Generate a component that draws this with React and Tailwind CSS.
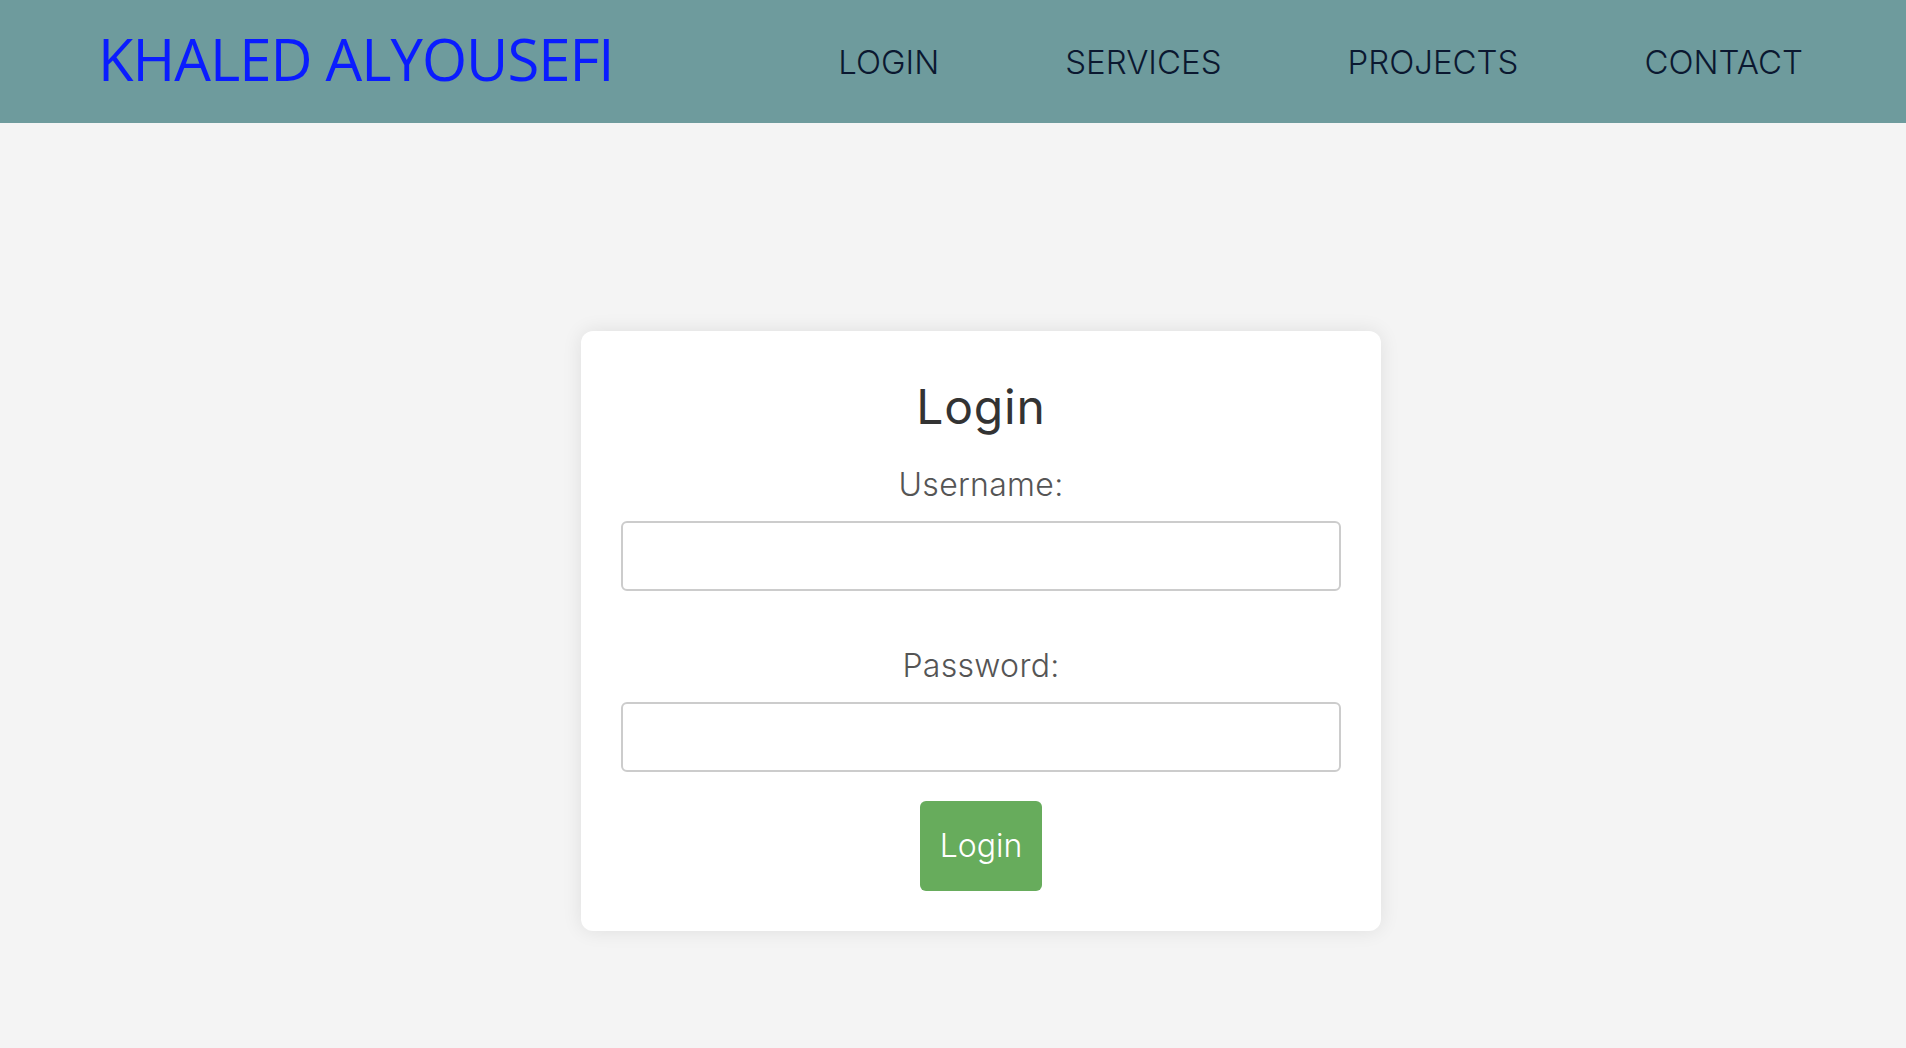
import { useState } from 'react';

const NAV_ITEMS = ['LOGIN', 'SERVICES', 'PROJECTS', 'CONTACT'];

const App = () => {
    const [username, setUsername] = useState('');
    const [password, setPassword] = useState('');

    return (
        <div className="min-h-screen bg-[#f4f4f4] font-['Inter','Noto_Sans',sans-serif]">
            {/* Header */}
            <header className="h-[123px] bg-[#6e9b9d] flex items-center justify-between pl-[98px] pr-[103px]">
                <h1 className="font-['Open_Sans',sans-serif] font-normal text-[58px] leading-[58px] text-[#0a1cff] tracking-[-1px] mb-[6px]">
                    KHALED ALYOUSEFI
                </h1>
                <nav className="flex items-center gap-[126px]">
                    {NAV_ITEMS.map((item) => (
                        <a key={item} href="#" className="text-[33px] leading-[34px] font-light text-[#0b1830]">
                            {item}
                        </a>
                    ))}
                </nav>
            </header>

            {/* Login card */}
            <main className="flex justify-center pt-[208px] pl-[56px]">
                <div className="w-[800px] bg-white rounded-xl shadow-[0_0_20px_rgba(0,0,0,0.09)] px-10 pt-[52px] pb-10 flex flex-col items-center">
                    <h2 className="text-[48px] leading-[48px] font-normal tracking-[0.8px] text-[#333]">Login</h2>
                    <label className="mt-[38px] text-[32px] leading-[32px] font-light tracking-[0.3px] text-[#555]">Username:</label>
                    <input
                        type="text"
                        value={username}
                        onChange={(e) => setUsername(e.target.value)}
                        className="mt-5 w-full h-[70px] border-2 border-[#cccccc] rounded-md px-3 outline-none"
                    />
                    <label className="mt-[59px] text-[32px] leading-[32px] font-light tracking-[0.3px] text-[#555]">Password:</label>
                    <input
                        type="password"
                        value={password}
                        onChange={(e) => setPassword(e.target.value)}
                        className="mt-5 w-full h-[70px] border-2 border-[#cccccc] rounded-md px-3 outline-none"
                    />
                    <button className="mt-[29px] w-[122px] h-[90px] bg-[#67ac5c] rounded-md text-white text-[32px] leading-[32px] font-light">
                        Login
                    </button>
                </div>
            </main>
        </div>
    );
};

export default App;
